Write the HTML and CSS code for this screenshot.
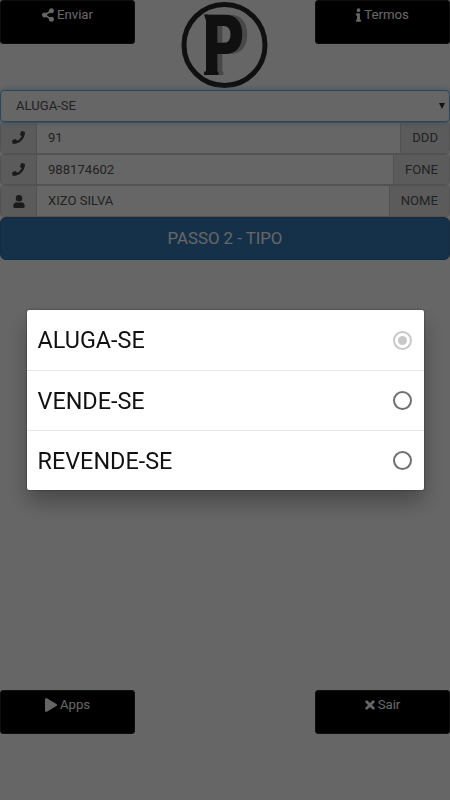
FILE: index.html
```
<!DOCTYPE html>
<html lang="pt-BR">
<head>
    <meta charset="UTF-8">
    <meta name="viewport" content="width=device-width, initial-scale=1.0">
    <title>Passo 1</title>
    <link rel="stylesheet" href="styles.css">
</head>
<body>

    <div class="page">
        <header class="bar">
            <button class="nav-btn">
                <svg class="icon" width="12" height="14" viewBox="0 0 448 512"><path d="M352 320c-22.600 0-43.400 7.800-59.800 20.900l-102.500-64.100a96.600 96.600 0 0 0 0-41.700l102.500-64.100C308.600 184.200 329.400 192 352 192c53 0 96-43 96-96S405 0 352 0s-96 43-96 96c0 7.200.8 14.100 2.300 20.800l-102.500 64.100C139.400 167.800 118.600 160 96 160c-53 0-96 43-96 96s43 96 96 96c22.600 0 43.400-7.800 59.800-20.900l102.500 64.100A96.300 96.300 0 0 0 256 416c0 53 43 96 96 96s96-43 96-96-43-96-96-96z"/></svg>
                <span>Enviar</span>
            </button>
            <svg class="logo" width="90" height="90" viewBox="0 0 90 90">
                <circle cx="44.500" cy="45" r="40.500"/>
                <g class="letter">
                    <text transform="translate(20.500 74.500) scale(.735 1)">P</text>
                    <path d="M24 14.500h4v6h-2zM26 67v4l-2 1v3h14.500v-3l-2-1v-4z"/>
                </g>
            </svg>
            <button class="nav-btn">
                <svg class="icon" width="5" height="13" viewBox="0 0 192 512"><path d="M20 424h20V280H20c-11 0-20-9-20-20v-48c0-11 9-20 20-20h112c11 0 20 9 20 20v212h20c11 0 20 9 20 20v48c0 11-9 20-20 20H20c-11 0-20-9-20-20v-48c0-11 9-20 20-20zM96 0a72 72 0 1 1 0 144A72 72 0 0 1 96 0z"/></svg>
                <span>Termos</span>
            </button>
        </header>

        <main class="form">
            <div class="select">
                <span>ALUGA-SE</span>
                <span class="arrow"></span>
            </div>
            <div class="input-group">
                <span class="addon addon-icon"><svg width="13" height="13" viewBox="0 0 512 512"><path d="M493 25 389 1c-11-3-23 3-27 14l-48 112c-4 10-1 21 7 28l61 50a371 371 0 0 1-177 177l-50-61c-7-8-18-11-28-7L15 362C4 366-2 378 1 389l24 104c3 11 12 19 24 19 256 0 463-207 463-463 0-12-8-22-19-24z"/></svg></span>
                <span class="field">91</span>
                <span class="addon">DDD</span>
            </div>
            <div class="input-group">
                <span class="addon addon-icon"><svg width="13" height="13" viewBox="0 0 512 512"><path d="M493 25 389 1c-11-3-23 3-27 14l-48 112c-4 10-1 21 7 28l61 50a371 371 0 0 1-177 177l-50-61c-7-8-18-11-28-7L15 362C4 366-2 378 1 389l24 104c3 11 12 19 24 19 256 0 463-207 463-463 0-12-8-22-19-24z"/></svg></span>
                <span class="field">988174602</span>
                <span class="addon">FONE</span>
            </div>
            <div class="input-group">
                <span class="addon addon-icon"><svg width="12" height="13" viewBox="0 0 448 512"><path d="M224 256a128 128 0 1 0 0-256 128 128 0 0 0 0 256zm90 32h-17a174 174 0 0 1-146 0h-17C60 288 0 348 0 422v42c0 27 21 48 48 48h352c27 0 48-21 48-48v-42c0-74-60-134-134-134z"/></svg></span>
                <span class="field">XIZO SILVA</span>
                <span class="addon">NOME</span>
            </div>
            <button class="step-btn">PASSO 2 - TIPO</button>
        </main>

        <footer class="bar">
            <button class="nav-btn">
                <svg class="icon" width="12" height="14" viewBox="0 0 448 512"><path d="M424 215 72 7C43-10 0 7 0 48v416c0 37 40 60 72 41l352-208c32-18 32-64 0-82z"/></svg>
                <span>Apps</span>
            </button>
            <button class="nav-btn">
                <svg class="icon" width="10" height="10" viewBox="0 0 10 10"><path class="cross" d="M1.700 1.700 8.300 8.300M8.300 1.700 1.700 8.300"/></svg>
                <span>Sair</span>
            </button>
        </footer>
    </div>

    <div class="overlay">
        <div class="dialog">
            <div class="option"><span>ALUGA-SE</span><span class="radio checked"></span></div>
            <div class="option"><span>VENDE-SE</span><span class="radio"></span></div>
            <div class="option"><span>REVENDE-SE</span><span class="radio"></span></div>
        </div>
    </div>

</body>
</html>
```
FILE: styles.css
```
* { box-sizing: border-box; }
body {
    margin: 0;
    font-family: Roboto, Arial, sans-serif;
    font-size: 13.100px;
    color: #555;
    background: #fff;
    overflow: hidden;
}
.page {
    display: flex;
    flex-direction: column;
    height: 800px;
}
.bar {
    display: flex;
    justify-content: space-between;
    align-items: flex-start;
}
header.bar { height: 90px; }
footer.bar {
    margin-top: auto;
    padding-bottom: 66px;
}
.nav-btn {
    display: flex;
    justify-content: center;
    align-items: flex-start;
    gap: 3px;
    width: 135px;
    height: 44px;
    padding: 6px 0 0;
    border: 1px solid #222;
    border-radius: 3px;
    background: #000;
    color: #fff;
    font: 13.200px/16px Roboto, Arial, sans-serif;
}
.nav-btn .icon {
    fill: currentColor;
    height: 16px;
}
.cross {
    stroke: currentColor;
    stroke-width: 2.800;
    stroke-linecap: round;
}
.logo circle {
    fill: none;
    stroke: #282828;
    stroke-width: 5;
}
.letter {
    fill: #282828;
    font: bold 82px "DejaVu Sans", sans-serif;
    filter: drop-shadow(5px 0 0 #b4b4b4);
}

.select {
    position: relative;
    display: flex;
    justify-content: space-between;
    align-items: center;
    height: 32px;
    padding: 0 4px 1px 15px;
    border: 1px solid #66afe9;
    border-radius: 4px;
    background: #fff;
    box-shadow: 0 0 7px rgba(102, 175, 233, .6);
}
.arrow {
    border: 3px solid transparent;
    border-top: 6px solid #333;
    border-bottom: 0;
}
.input-group {
    display: flex;
    height: 31.700px;
    border: 1px solid #ccc;
    border-radius: 4px;
    overflow: hidden;
}
.addon {
    display: flex;
    align-items: center;
    padding: 0 11px 1px;
    background: #e4e4e4;
    border-left: 1px solid #ccc;
}
.addon-icon {
    justify-content: center;
    width: 36px;
    padding: 0;
    border-left: 0;
    border-right: 1px solid #ccc;
}
.addon svg { fill: #444; }
.field {
    flex: 1;
    display: flex;
    align-items: center;
    padding: 0 0 1px 11px;
    background: #fff;
}
.step-btn {
    display: block;
    width: 100%;
    height: 43px;
    padding: 0 0 2px;
    border: 1px solid #2e6da4;
    border-radius: 6px;
    background: #337ab7;
    color: #fff;
    font: 16.800px Roboto, Arial, sans-serif;
}

.overlay {
    position: fixed;
    inset: 0;
    display: flex;
    justify-content: center;
    align-items: center;
    background: rgba(0, 0, 0, .6);
}
.dialog {
    width: 397px;
    border-radius: 2px;
    background: #fff;
    box-shadow: 0 0 2px rgba(0, 0, 0, .6), 0 12px 22px rgba(0, 0, 0, .3);
}
.option {
    display: flex;
    justify-content: space-between;
    align-items: center;
    height: 60px;
    padding: 0 12px 0 11px;
    color: #111;
    font-size: 23.400px;
}
.option + .option { border-top: 1px solid #e6e6e6; }
.radio {
    display: flex;
    width: 19px;
    height: 19px;
    border: 2px solid #707070;
    border-radius: 50%;
}
.radio.checked { border-color: #c8c8c8; }
.radio.checked::before {
    content: "";
    width: 9px;
    height: 9px;
    margin: auto;
    border-radius: 50%;
    background: #c8c8c8;
}
```
